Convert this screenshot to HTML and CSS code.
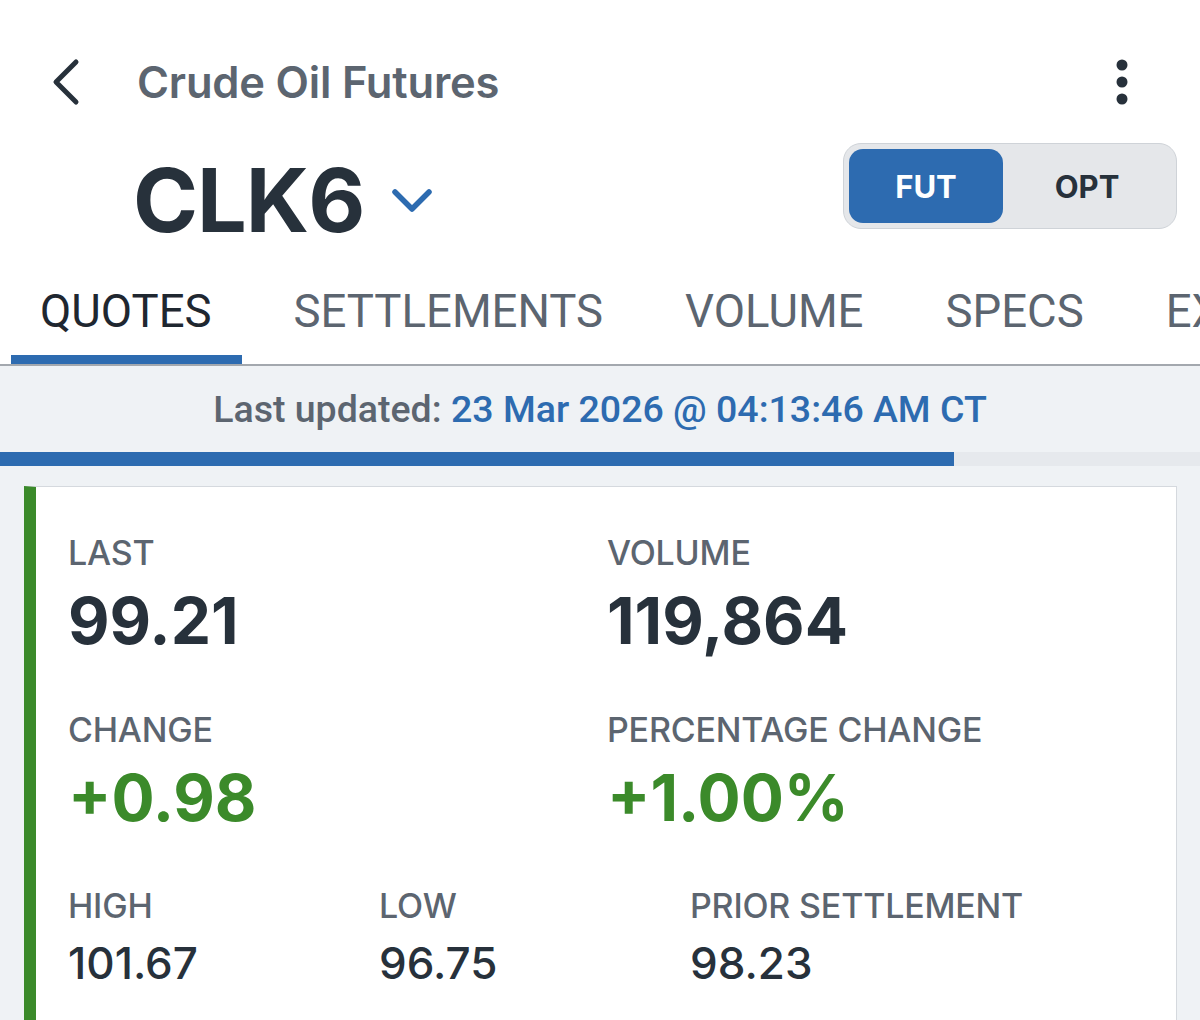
FILE: index.html
```html
<!DOCTYPE html>
<html>
<head>
<meta charset="utf-8">
<link rel="stylesheet" href="styles.css">
</head>
<body>
<div class="app">
  <header class="topbar">
    <svg class="back" width="40" height="48" viewBox="0 0 40 48"><path d="M28 4 L8 24 L28 44" fill="none" stroke="#27313b" stroke-width="5" stroke-linecap="round" stroke-linejoin="round"/></svg>
    <h1 class="title">Crude Oil Futures</h1>
    <svg class="kebab" width="14" height="50" viewBox="0 0 14 50"><circle cx="7" cy="8" r="5.5" fill="#27313b"/><circle cx="7" cy="25" r="5.5" fill="#27313b"/><circle cx="7" cy="42" r="5.5" fill="#27313b"/></svg>
  </header>
  <div class="symbolrow">
    <div class="symbol">
      <span class="sym">CLK6</span>
      <svg class="caret" width="44" height="28" viewBox="0 0 44 28"><path d="M5 5 L22 22 L39 5" fill="none" stroke="#2d6bb0" stroke-width="5.5" stroke-linecap="round" stroke-linejoin="round"/></svg>
    </div>
    <div class="toggle">
      <div class="seg active">FUT</div>
      <div class="seg">OPT</div>
    </div>
  </div>
  <nav class="tabs">
    <div class="tab active">QUOTES</div>
    <div class="tab">SETTLEMENTS</div>
    <div class="tab">VOLUME</div>
    <div class="tab">SPECS</div>
    <div class="tab">EXPIRATIONS</div>
  </nav>
  <section class="content">
    <div class="updated"><span class="lbl">Last updated:</span> <span class="when">23 Mar 2026 @ 04:13:46 AM CT</span></div>
    <div class="progress"><div class="bar" style="width:954px"></div></div>
    <div class="card">
      <div class="grid2">
        <div class="stat">
          <div class="label">LAST</div>
          <div class="big">99.21</div>
        </div>
        <div class="stat">
          <div class="label">VOLUME</div>
          <div class="big">119,864</div>
        </div>
        <div class="stat">
          <div class="label">CHANGE</div>
          <div class="big green">+0.98</div>
        </div>
        <div class="stat">
          <div class="label">PERCENTAGE CHANGE</div>
          <div class="big green">+1.00%</div>
        </div>
      </div>
      <div class="grid3">
        <div class="stat">
          <div class="label">HIGH</div>
          <div class="mid">101.67</div>
        </div>
        <div class="stat">
          <div class="label">LOW</div>
          <div class="mid">96.75</div>
        </div>
        <div class="stat">
          <div class="label">PRIOR SETTLEMENT</div>
          <div class="mid">98.23</div>
        </div>
      </div>
    </div>
  </section>
</div>
</body>
</html>
```

FILE: styles.css
```css
* { box-sizing: border-box; margin: 0; padding: 0; }
html, body { width: 1200px; height: 1020px; overflow: hidden; background: #fff; }
body { font-family: Inter, "Noto Sans", sans-serif; color: #27313b; }
.app { width: 1200px; }

.topbar {
  display: flex;
  align-items: center;
  height: 131px;
  padding: 32px 0 0 48px;
}
.back { flex: none; }
.title {
  flex: 1;
  margin-left: 49px;
  font-size: 43.5px;
  font-weight: 600;
  color: #5c6570;
  letter-spacing: -0.2px;
}
.kebab { flex: none; margin-right: 71px; }

.symbolrow {
  display: flex;
  justify-content: space-between;
  align-items: center;
  height: 136px;
  padding: 0 23px 0 133px;
  margin-top: -4px;
}
.symbol { display: flex; align-items: center; margin-top: 10px; }
.sym {
  font-size: 88px;
  font-weight: 700;
  color: #27313b;
  letter-spacing: -1px;
}
.caret { margin-left: 26px; margin-top: 2px; }

.toggle {
  display: flex;
  width: 334px;
  height: 86px;
  padding: 5px;
  border: 1.5px solid #cfd3d8;
  border-radius: 18px;
  background: #e5e7ea;
  margin-bottom: 18px;
}
.seg {
  flex: 1;
  display: flex;
  align-items: center;
  justify-content: center;
  font-size: 31px;
  font-weight: 700;
  color: #27313b;
  border-radius: 14px;
}
.seg.active {
  flex: 0 0 154px;
  background: #2d6bb0;
  color: #fff;
}

.tabs {
  display: flex;
  gap: 23px;
  padding-left: 11px;
  height: 103px;
  border-bottom: 2px solid #a3a8ae;
  white-space: nowrap;
  overflow: hidden;
}
.tab {
  flex: none;
  padding: 22px 30px 0 29px;
  font-family: Roboto, "Noto Sans", sans-serif;
  font-size: 45.5px;
  font-weight: 400;
  color: #5c6570;
  border-bottom: 9px solid transparent;
}
.tab.active { color: #1f2730; border-bottom-color: #2d6bb0; }

.content {
  background: #eff2f5;
  height: 660px;
}
.updated {
  text-align: center;
  font-family: Roboto, "Noto Sans", sans-serif;
  font-size: 37.5px;
  font-weight: 500;
  padding-top: 21px;
  height: 86px;
}
.updated .lbl { color: #5c6570; }
.updated .when { color: #2d6bb0; }

.progress {
  height: 14px;
  background: #e6e9ed;
}
.bar { height: 100%; background: #2d6bb0; }

.card {
  margin: 20px 23px 0 24px;
  background: #fff;
  border: 1px solid #d5d9de;
  border-left: 12px solid #3b8a2a;
  padding: 46px 0 0 32px;
  height: 560px;
}
.grid2 {
  display: grid;
  grid-template-columns: 539px 1fr;
  row-gap: 49px;
}
.grid3 {
  display: grid;
  grid-template-columns: 311px 311px 1fr;
  margin-top: 48px;
}
.label {
  font-size: 34px;
  font-weight: 500;
  color: #5c6570;
  letter-spacing: -0.2px;
  line-height: 40px;
}
.big {
  font-size: 64px;
  font-weight: 700;
  color: #27313b;
  line-height: 80px;
  margin-top: 8px;
}
.big.green { color: #3b8a2a; }
.mid {
  font-size: 44px;
  font-weight: 500;
  color: #27313b;
  line-height: 56px;
  margin-top: 9px;
}
```
